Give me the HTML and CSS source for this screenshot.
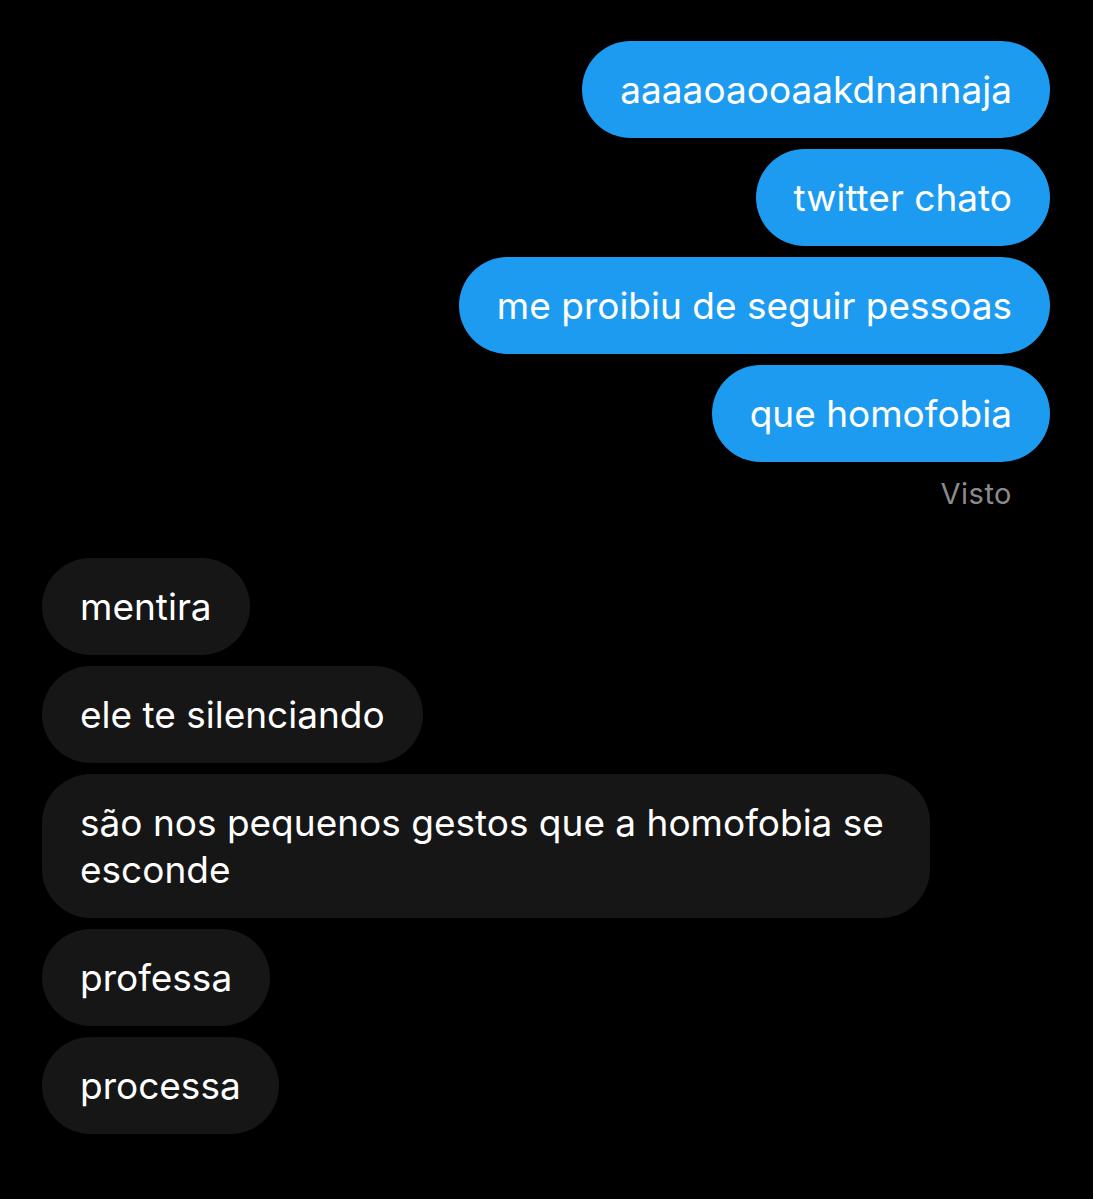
FILE: index.html
```html
<!DOCTYPE html>
<html lang="pt">
<head>
    <meta charset="UTF-8">
    <meta name="viewport" content="width=device-width, initial-scale=1.0">
    <title>Mensagens</title>
    <link rel="stylesheet" href="styles.css">
</head>
<body>
    <div class="chat">
        <!-- mensagens enviadas -->
        <div class="group sent">
            <div class="bubble">aaaaoaooaakdnannaja</div>
            <div class="bubble">twitter chato</div>
            <div class="bubble">me proibiu de seguir pessoas</div>
            <div class="bubble">que homofobia</div>
            <div class="seen">Visto</div>
        </div>

        <!-- mensagens recebidas -->
        <div class="group received">
            <div class="bubble">mentira</div>
            <div class="bubble">ele te silenciando</div>
            <div class="bubble">são nos pequenos gestos que a homofobia se esconde</div>
            <div class="bubble">professa</div>
            <div class="bubble">processa</div>
        </div>
    </div>
</body>
</html>
```

FILE: styles.css
```css
html, body {
    margin: 0;
    padding: 0;
    background: #000000;
}
body {
    font-family: Inter, "Noto Sans", sans-serif;
    color: #ffffff;
}
.chat {
    padding: 41px 43px 40px 42px;
    display: flex;
    flex-direction: column;
    gap: 47px;
}
.group {
    display: flex;
    flex-direction: column;
    gap: 11px;
}
.sent {
    align-items: flex-end;
}
.received {
    align-items: flex-start;
}
.bubble {
    box-sizing: border-box;
    max-width: 888px;
    padding: 25px 38px;
    border-radius: 49px;
    font-size: 37px;
    line-height: 47px;
}
.sent .bubble {
    background-color: #1d9bf0;
}
.received .bubble {
    background-color: #161616;
}
.seen {
    margin-top: 4px;
    padding-right: 38px;
    font-size: 29px;
    line-height: 34px;
    letter-spacing: 0.5px;
    color: #8b8b8b;
}
```
